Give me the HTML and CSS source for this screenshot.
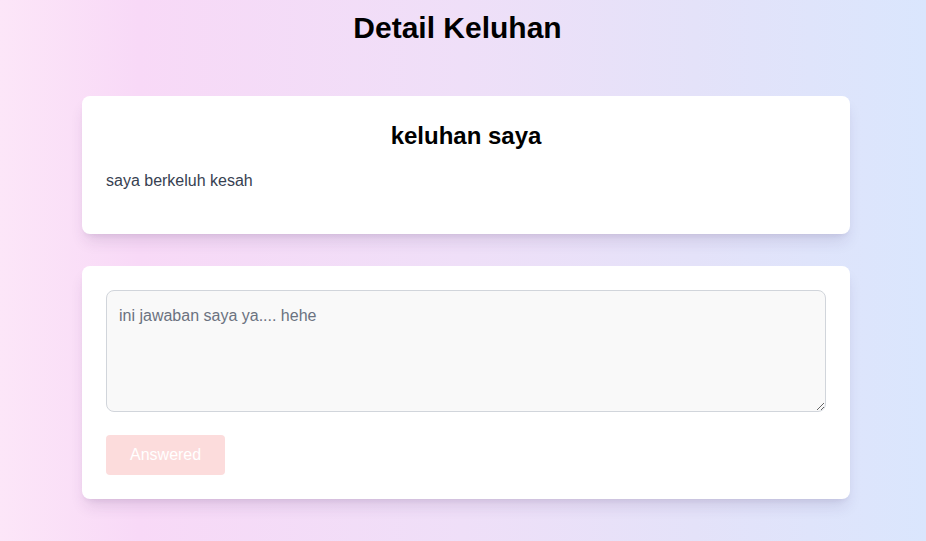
FILE: index.html
```html
<!DOCTYPE html>
<html lang="id">
<head>
<meta charset="utf-8">
<title>Detail Keluhan</title>
<link rel="stylesheet" href="styles.css">
</head>
<body>
<main class="page">
  <h1 class="page-title">Detail Keluhan</h1>
  <div class="cards">
    <section class="card complaint">
      <h2 class="card-title">keluhan saya</h2>
      <p class="card-text">saya berkeluh kesah</p>
    </section>
    <section class="card answer">
      <textarea class="answer-input" rows="4" placeholder="ini jawaban saya ya.... hehe"></textarea>
      <button class="answer-btn" type="button">Answered</button>
    </section>
  </div>
</main>
</body>
</html>
```
FILE: styles.css
```css
* { box-sizing: border-box; }
html, body { margin: 0; height: 100%; }
body {
  font-family: "Liberation Sans", Arial, sans-serif;
  background: linear-gradient(to right, #fce6f8 0%, #f8d9f7 15%, #efdff8 50%, #e4e2f9 75%, #dae6fd 100%);
  color: #111;
  min-height: 541px;
}
.page {
  padding: 10px 0 0;
  display: flex;
  flex-direction: column;
}
.page-title {
  margin: 0 0 50px;
  padding-right: 11px;
  font-size: 30px;
  line-height: 36px;
  font-weight: 700;
  color: #000;
  text-align: center;
}
.cards {
  display: flex;
  flex-direction: column;
  align-items: center;
  gap: 32px;
  padding-left: 6px;
}
.card {
  width: 768px;
  background: #fff;
  border-radius: 8px;
  padding: 24px;
  box-shadow: 0 10px 15px -3px rgba(60, 30, 90, 0.12), 0 4px 6px -4px rgba(60, 30, 90, 0.12);
}
.complaint { padding-bottom: 41px; }
.card-title {
  margin: 0 0 17px;
  font-size: 24px;
  line-height: 32px;
  font-weight: 700;
  color: #000;
  text-align: center;
}
.card-text {
  margin: 0;
  font-size: 16px;
  line-height: 24px;
  color: #374151;
}
.answer-input {
  display: block;
  width: 100%;
  height: 122px;
  margin: 0 0 23px;
  padding: 13px 12px 11px;
  border: 1px solid #d1d5db;
  border-radius: 8px;
  background: #f9f9f9;
  font-family: "Liberation Sans", Arial, sans-serif;
  font-size: 16px;
  line-height: 24px;
  color: #111;
}
.answer-input::placeholder { color: #6b7280; }
.answer-btn {
  display: block;
  height: 40px;
  padding: 8px 24px;
  border: none;
  border-radius: 4px;
  background: #fcdcdc;
  color: #fff;
  font-family: "Liberation Sans", Arial, sans-serif;
  font-size: 16px;
  line-height: 24px;
}
```
